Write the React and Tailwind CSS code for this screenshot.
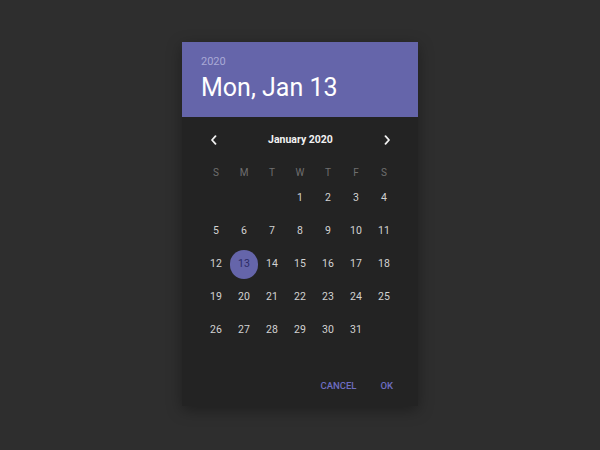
const WEEKDAYS = ['S', 'M', 'T', 'W', 'T', 'F', 'S'];

// Jan 2020 starts on a Wednesday
const CELLS = [...Array(3).fill(null), ...Array.from({ length: 31 }, (_, i) => i + 1)];
const WEEKS = Array.from({ length: 5 }, (_, w) => {
  const row = CELLS.slice(w * 7, w * 7 + 7);
  while (row.length < 7) row.push(null);
  return row;
});

function Chevron({ dir }) {
  return (
    <svg width="8" height="10" viewBox="0 0 8 10" fill="none" aria-hidden>
      <path
        d={dir === 'left' ? 'M5.5 1.2L2 5L5.5 8.8' : 'M2.5 1.2L6 5L2.5 8.8'}
        stroke="#f2f2f2"
        strokeWidth="1.8"
        strokeLinecap="round"
        strokeLinejoin="round"
      />
    </svg>
  );
}

export default function App() {
  const selected = 13;

  return (
    <div
      className="flex h-[450px] w-[600px] justify-center bg-[#2e2e2e] pt-[42px]"
      style={{ fontFamily: 'Roboto, "Liberation Sans", sans-serif' }}
    >
      <div className="h-[364px] w-[236px] bg-[#232323] shadow-[0_4px_14px_rgba(0,0,0,0.35)]">
        <div className="h-[75px] bg-[#6565aa] px-[19px] pt-[13px]">
          <p className="text-[11px] leading-[14px] text-[#a9a9d6]">2020</p>
          <p className="mt-px text-[25px] font-normal leading-[36px] text-white">Mon, Jan 13</p>
        </div>

        <div className="px-[20px] pt-[14px]">
          <div className="flex h-[18px] items-center justify-between pl-[8px] pr-[7px]">
            <Chevron dir="left" />
            <span className="text-[10.5px] font-bold text-[#f2f2f2]">January 2020</span>
            <Chevron dir="right" />
          </div>

          <div className="mt-[14px] grid h-[18px] grid-cols-7 items-center text-center text-[10px] text-[#6f6f6f]">
            {WEEKDAYS.map((d, i) => (
              <span key={i}>{d}</span>
            ))}
          </div>

          <div className="grid">
            {WEEKS.map((row, w) => (
              <div key={w} className="grid h-[33px] grid-cols-7 items-center pt-px text-center text-[10.5px] text-[#d2d2d2]">
                {row.map((d, i) =>
                  d === selected ? (
                    <span key={i} className="flex justify-center">
                      <span className="flex h-[29px] w-[29px] items-center justify-center rounded-full bg-[#6565aa] text-[#2b2b66]">
                        {d}
                      </span>
                    </span>
                  ) : (
                    <span key={i}>{d ?? ''}</span>
                  )
                )}
              </div>
            ))}
          </div>
        </div>

        <div className="mt-[33px] flex justify-end gap-[24px] pr-[25px] text-[9.5px] font-medium leading-[14px] text-[#6e6ec2]">
          <span>CANCEL</span>
          <span>OK</span>
        </div>
      </div>
    </div>
  );
}
